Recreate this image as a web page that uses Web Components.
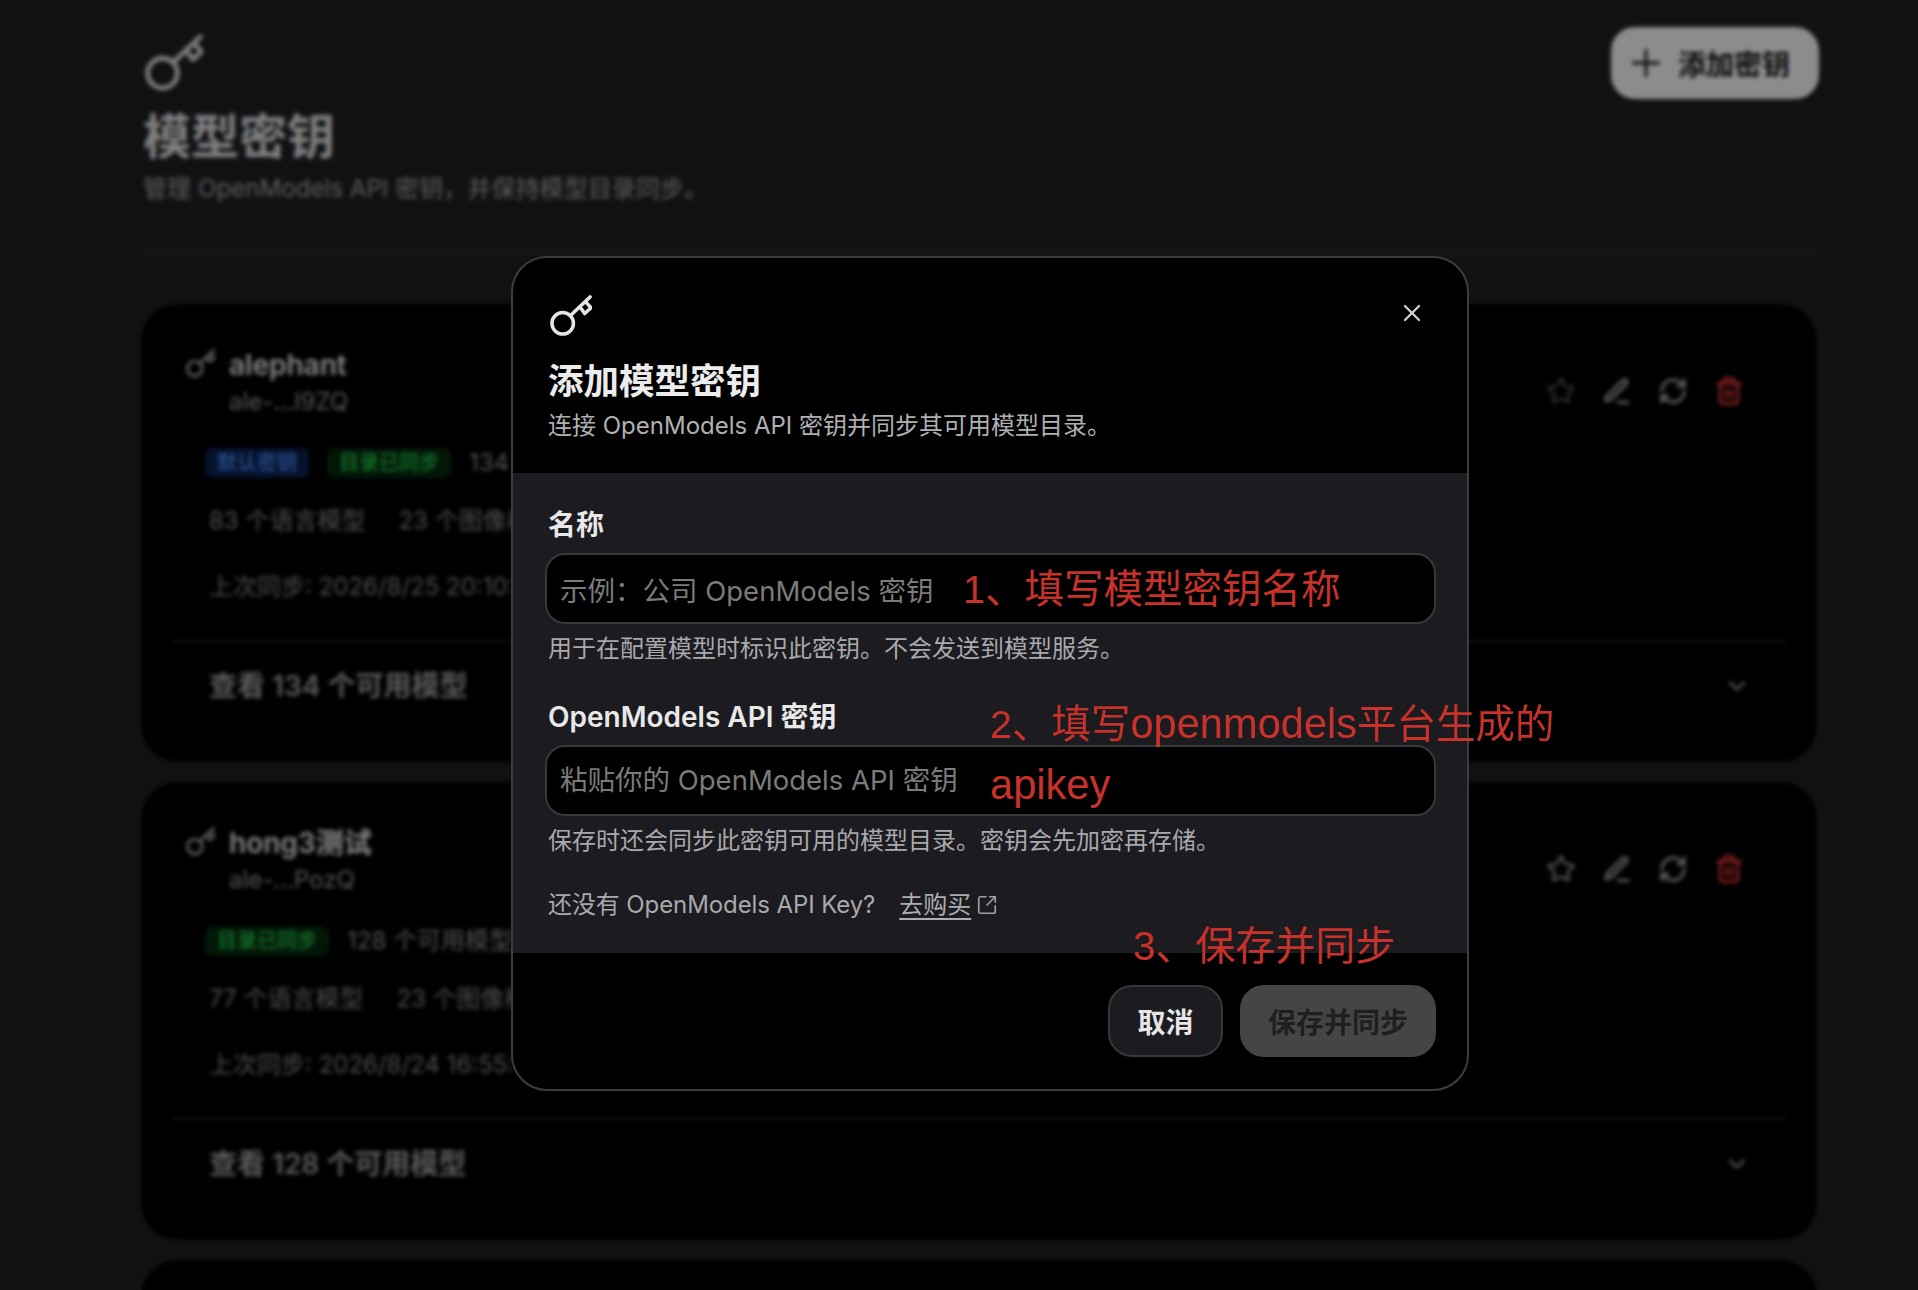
<!DOCTYPE html>
<html lang="zh-CN">
<head>
<meta charset="utf-8">
<title>模型密钥</title>
<style>
html,body{margin:0;padding:0;background:#1f2024;height:1290px;overflow:hidden;font-family:Inter,"Noto Sans CJK SC",sans-serif}
</style>
</head>
<body>
<om-app></om-app>
<script>
const ICONS={
 star:'<path d="M11.525 2.295a.53.53 0 0 1 .95 0l2.31 4.679a2.123 2.123 0 0 0 1.595 1.16l5.166.756a.53.53 0 0 1 .294.904l-3.736 3.638a2.123 2.123 0 0 0-.611 1.878l.882 5.14a.53.53 0 0 1-.771.56l-4.618-2.428a2.122 2.122 0 0 0-1.973 0L6.396 21.01a.53.53 0 0 1-.77-.56l.881-5.139a2.122 2.122 0 0 0-.611-1.879L2.16 9.795a.53.53 0 0 1 .294-.906l5.165-.755a2.122 2.122 0 0 0 1.597-1.16z"/>',
 pen:'<path d="M13 21h8"/><path d="M16.376 3.622a1 1 0 0 1 3.002 3.002L7.368 18.635a2 2 0 0 1-.855.506l-2.872.838a.5.5 0 0 1-.62-.62l.838-2.872a2 2 0 0 1 .506-.854z"/>',
 sync:'<path d="M3 12a9 9 0 0 1 9-9 9.75 9.75 0 0 1 6.74 2.74L21 8"/><path d="M21 3v5h-5"/><path d="M21 12a9 9 0 0 1-9 9 9.75 9.75 0 0 1-6.74-2.74L3 16"/><path d="M8 16H3v5"/>',
 trash:'<path d="M3 6h18"/><path d="M19 6v14a2 2 0 0 1-2 2H7a2 2 0 0 1-2-2V6"/><path d="M8 6V4a2 2 0 0 1 2-2h4a2 2 0 0 1 2 2v2"/><path d="M10 11v6"/><path d="M14 11v6"/>',
 chevron:'<path d="m6 9 6 6 6-6"/>',
 plus:'<path d="M12 3v18"/><path d="M3 12h18"/>',
 close:'<path d="M19 5 5 19"/><path d="m5 5 14 14"/>',
 external:'<path d="M21 13v6a2 2 0 0 1-2 2H5a2 2 0 0 1-2-2V5a2 2 0 0 1 2-2h6"/><path d="m21 3-9 9"/><path d="M15 3h6v6"/>'
};
class OmIcon extends HTMLElement{
 connectedCallback(){
  if(this.shadowRoot)return;
  const s=this.getAttribute('size')||24,w=this.getAttribute('stroke')||2,n=this.getAttribute('name');
  this.attachShadow({mode:'open'}).innerHTML=`<style>:host{display:inline-flex;flex:none;line-height:0}</style><svg width="${s}" height="${s}" viewBox="0 0 24 24" fill="none" stroke="currentColor" stroke-width="${w}" stroke-linecap="round" stroke-linejoin="round">${ICONS[n]||''}</svg>`;
 }
}
customElements.define('om-icon',OmIcon);
class OmKey extends HTMLElement{
 connectedCallback(){
  if(this.shadowRoot)return;
  const s=+this.getAttribute('size')||42;
  this.attachShadow({mode:'open'}).innerHTML=`<style>:host{display:inline-flex;flex:none;line-height:0}</style><svg width="${s}" height="${s}" viewBox="0 0 43 42" fill="none" stroke="currentColor" stroke-width="3.6" stroke-linecap="round" stroke-linejoin="round"><circle cx="13" cy="28.5" r="11"/><path d="M21 20.5 41 1.5"/><path d="M30.5 11.5 35.5 18.5 42 12.5 36.5 6.5"/></svg>`;
 }
}
customElements.define('om-key',OmKey);
class OmBadge extends HTMLElement{
 constructor(){super();this.attachShadow({mode:'open'}).innerHTML=`<style>
 :host{display:inline-flex;align-items:center;height:30px;padding:0 12px;border-radius:7px;font-size:20px;font-weight:500;line-height:30px;background:#062a0e;color:#24d44f}
 :host([tone=blue]){background:#0c2250;color:#4a90ff}
 </style><slot></slot>`}
}
customElements.define('om-badge',OmBadge);
class OmCard extends HTMLElement{
 constructor(){super();this.attachShadow({mode:'open'}).innerHTML=`<style>
 :host{display:block;background:#000;border-radius:36px;box-shadow:0 0 0 1px #26272b;height:458px;flex:none;box-sizing:border-box;overflow:hidden}
 .top{display:flex;justify-content:space-between;padding:43px 73px 0 45px}
 .id{display:flex;gap:14px}
 .name{font-size:28px;font-weight:600;line-height:36px;color:#ececec;white-space:nowrap}
 .sub{font-size:24px;line-height:30px;color:#999;margin-top:4px;white-space:nowrap}
 .key{color:#c4c4c4;margin-top:2px}
 .actions{display:flex;gap:26px;align-items:center;margin-top:18px;color:#b0b0b0}
 .star{color:var(--star,#666)} .del{color:#f03a3a}
 .badges{display:flex;align-items:center;gap:18px;margin:31px 0 0 64px;font-size:24px;line-height:30px;color:#939393;white-space:nowrap}
 .counts{display:flex;gap:33px;margin:27px 0 0 68px;font-size:24px;line-height:32px;color:#8c8c8c;white-space:nowrap}
 .sync{margin:34px 0 0 68px;font-size:24px;line-height:32px;color:#8a8a8a;white-space:nowrap}
 hr{border:0;height:2px;background:#2b2c30;margin:37px 31px 0 32px}
 .foot{display:flex;justify-content:space-between;align-items:center;padding:26px 66px 0 68px;font-size:28px;font-weight:600;line-height:36px;color:#a2a2a2;white-space:nowrap}
 .foot om-icon{color:#929292}
 </style>
 <div class="top">
  <div class="id"><om-key class="key" size="29"></om-key><div><div class="name"><slot name="name"></slot></div><div class="sub"><slot name="masked"></slot></div></div></div>
  <div class="actions"><om-icon class="star" name="star" size="30"></om-icon><om-icon name="pen" size="30" stroke="2.2"></om-icon><om-icon name="sync" size="30" stroke="2.2"></om-icon><om-icon class="del" name="trash" size="30" stroke="2.4"></om-icon></div>
 </div>
 <div class="badges"><slot name="badges"></slot></div>
 <div class="counts"><slot name="counts"></slot></div>
 <div class="sync"><slot name="sync"></slot></div>
 <hr>
 <div class="foot"><span><slot name="view"></slot></span><om-icon name="chevron" size="28" stroke="2.2"></om-icon></div>`}
}
customElements.define('om-card',OmCard);
class OmField extends HTMLElement{
 constructor(){super();this.attachShadow({mode:'open'}).innerHTML=`<style>
 :host{display:block}
 .label{font-size:28px;font-weight:600;line-height:36px;color:#e8e8e8;padding-left:3px;white-space:nowrap}
 .box{box-sizing:border-box;height:71px;margin-top:10px;border:2px solid #37373c;border-radius:20px;background:#000;display:flex;align-items:center;padding:0 13px;font-size:27.5px;color:#7b7b7b;white-space:nowrap}
 :host([high]) .box{padding-bottom:5px}
 .help{font-size:24px;line-height:32px;color:#a9a9ab;padding:9px 0 0 3px;white-space:nowrap}
 </style><div class="label"><slot name="label"></slot></div><div class="box" role="textbox"><slot name="placeholder"></slot></div><div class="help"><slot name="help"></slot></div>`}
}
customElements.define('om-field',OmField);
class OmButton extends HTMLElement{
 constructor(){super();this.attachShadow({mode:'open'}).innerHTML=`<style>
 :host{box-sizing:border-box;display:inline-flex;align-items:center;justify-content:center;height:72px;padding:0 27.5px;border-radius:24px;font-size:28px;font-weight:600;border:2px solid #37373c;background:#1b1b20;color:#e6e6e6;white-space:nowrap}
 :host([variant=disabled]){background:#454545;border-color:#454545;color:#1f1f1f;padding:0 26px}
 :host([variant=primary]){background:#fff;border-color:#fff;color:#141414;padding:0 27px 0 16px;gap:15px}
 </style><slot></slot>`}
}
customElements.define('om-button',OmButton);
class OmNote extends HTMLElement{
 constructor(){super();this.attachShadow({mode:'open'}).innerHTML=`<style>
 :host{position:absolute;font-family:"Liberation Sans","Noto Sans CJK SC",sans-serif;font-size:39.5px;line-height:60px;color:#c8322a;white-space:nowrap;font-weight:400}
 ::slotted(b){font-weight:400;font-size:41.6px}
 </style><slot></slot>`}
}
customElements.define('om-note',OmNote);
class OmDialog extends HTMLElement{
 constructor(){super();this.attachShadow({mode:'open'}).innerHTML=`<style>
 :host{position:relative;display:block;box-sizing:border-box;width:958px;height:835px;border:2px solid #3d3d41;border-radius:36px;background:#000}
 header{height:215px;box-sizing:border-box;padding:37px 33px 0 35px;position:relative}
 .ico{color:#e6e6e6;display:block;margin-left:2px}
 h2{margin:23px 0 0;font-size:35.5px;line-height:44px;font-weight:600;color:#ececec}
 p{margin:6px 0 0;font-size:24px;line-height:32px;color:#b0b0b2;white-space:nowrap}
 .close{position:absolute;right:43px;top:43px;color:#cfcfcf}
 .body{background:#1b1b20;height:480px;box-sizing:border-box;padding:34px 31px 0 32px;display:flex;flex-direction:column;gap:34px}
 .buy{font-size:24px;line-height:32px;color:#a9a9ab;padding-left:3px;margin-top:-2px}
 footer{display:flex;justify-content:flex-end;gap:17px;padding:32px 31px 0 0}
 </style>
 <header><om-key class="ico" size="42"></om-key><h2><slot name="title"></slot></h2><p><slot name="desc"></slot></p><om-icon class="close" name="close" size="24" stroke="2.3"></om-icon></header>
 <div class="body"><slot name="fields"></slot><div class="buy"><slot name="buy"></slot></div></div>
 <footer><slot name="actions"></slot></footer>
 <slot name="notes"></slot>`}
}
customElements.define('om-dialog',OmDialog);
class OmBuy extends HTMLElement{
 constructor(){super();this.attachShadow({mode:'open'}).innerHTML=`<style>
 :host{display:flex;align-items:center;white-space:nowrap}
 .q{margin-right:24px;letter-spacing:-.1px}
 a{color:#adadaf;text-decoration:underline;text-underline-offset:5px;text-decoration-thickness:2px}
 om-icon{margin-left:5px;color:#a0a0a2}
 </style><span class="q"><slot></slot></span><a><slot name="link"></slot></a><om-icon name="external" size="22" stroke="1.8"></om-icon>`}
}
customElements.define('om-buy',OmBuy);
class OmApp extends HTMLElement{
 constructor(){super();this.attachShadow({mode:'open'}).innerHTML=`<style>
 :host{display:block;height:1290px;overflow:hidden;position:relative;font-family:Inter,"Noto Sans CJK SC",sans-serif}
 .page{box-sizing:border-box;height:1290px;padding:27px 101px 0 143px;display:flex;flex-direction:column;background:#1f2024}
 .head{display:flex;justify-content:space-between;align-items:flex-start;margin-right:-2px}
 .lead{padding:7px 0 0 0}
 .lead om-key{color:#e4e4e4;display:block;margin-left:2px}
 h1{margin:15px 0 0;font-size:48px;line-height:60px;font-weight:700;color:#e6e6e6}
 .lead p{margin:6px 0 0;font-size:24.1px;line-height:32px;color:#a6a6a6}
 .rule{height:2px;background:#35363b;margin:47px -3px 50px -4px;flex:none}
 .cards{display:flex;flex-direction:column;gap:20px;margin-left:-2px}
 .scrim{position:absolute;inset:0;background:rgba(0,0,0,.45);-webkit-backdrop-filter:blur(2px);backdrop-filter:blur(2px);padding:256px 0 0 511px;box-sizing:border-box}
 </style>
 <div class="page">
  <div class="head">
   <div class="lead"><om-key size="58"></om-key><h1>模型密钥</h1><p>管理 OpenModels API 密钥，并保持模型目录同步。</p></div>
   <om-button variant="primary"><om-icon name="plus" size="34" stroke="2"></om-icon>添加密钥</om-button>
  </div>
  <div class="rule"></div>
  <div class="cards">
   <om-card style="--star:#555">
    <span slot="name">alephant</span><span slot="masked">ale-...I9ZQ</span>
    <om-badge slot="badges" tone="blue">默认密钥</om-badge><om-badge slot="badges">目录已同步</om-badge><span slot="badges">134 个可用模型</span>
    <span slot="counts">83 个语言模型</span><span slot="counts">23 个图像模型</span>
    <span slot="sync">上次同步: 2026/8/25 20:10:05</span>
    <span slot="view">查看 134 个可用模型</span>
   </om-card>
   <om-card style="--star:#9a9a9a">
    <span slot="name">hong3测试</span><span slot="masked">ale-...PozQ</span>
    <om-badge slot="badges">目录已同步</om-badge><span slot="badges">128 个可用模型</span>
    <span slot="counts">77 个语言模型</span><span slot="counts">23 个图像模型</span>
    <span slot="sync">上次同步: 2026/8/24 16:55:12</span>
    <span slot="view">查看 128 个可用模型</span>
   </om-card>
   <om-card></om-card>
  </div>
 </div>
 <div class="scrim">
  <om-dialog>
   <span slot="title">添加模型密钥</span>
   <span slot="desc">连接 OpenModels API 密钥并同步其可用模型目录。</span>
   <om-field slot="fields"><span slot="label">名称</span><span slot="placeholder">示例：公司 OpenModels 密钥</span><span slot="help">用于在配置模型时标识此密钥。不会发送到模型服务。</span></om-field>
   <om-field slot="fields" high><span slot="label">OpenModels API 密钥</span><span slot="placeholder">粘贴你的 OpenModels API 密钥</span><span slot="help">保存时还会同步此密钥可用的模型目录。密钥会先加密再存储。</span></om-field>
   <om-buy slot="buy">还没有 OpenModels API Key?<span slot="link">去购买</span></om-buy>
   <om-button slot="actions">取消</om-button>
   <om-button slot="actions" variant="disabled">保存并同步</om-button>
   <om-note slot="notes" style="left:450px;top:301px">1、填写模型密钥名称</om-note>
   <om-note slot="notes" style="left:477px;top:436px">2、填写<b>openmodels</b>平台生成的</om-note>
   <om-note slot="notes" style="left:477px;top:497px"><b>apikey</b></om-note>
   <om-note slot="notes" style="left:620px;top:658px;font-size:40px">3、保存并同步</om-note>
  </om-dialog>
 </div>`}
}
customElements.define('om-app',OmApp);
</script>
</body>
</html>
